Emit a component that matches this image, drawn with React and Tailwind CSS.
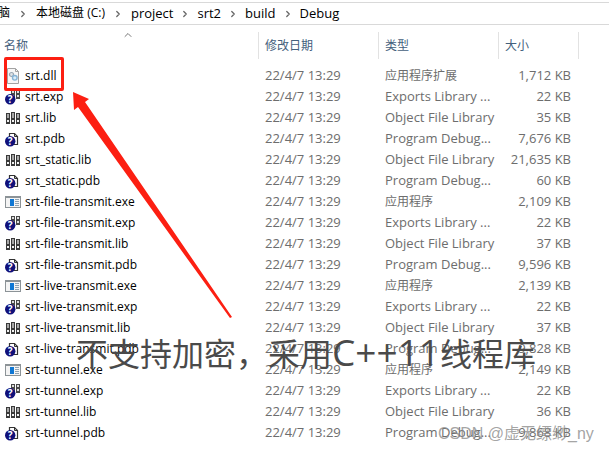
import { ChevronRight, ChevronUp } from 'lucide-react'

const path = ['脑', '本地磁盘 (C:)', 'project', 'srt2', 'build', 'Debug']

const TYPES = {
  dll: '应用程序扩展',
  exe: '应用程序',
  exp: 'Exports Library ...',
  lib: 'Object File Library',
  pdb: 'Program Debug...',
}

const files = [
  { name: 'srt.dll', size: '1,712 KB' },
  { name: 'srt.exp', size: '22 KB' },
  { name: 'srt.lib', size: '35 KB' },
  { name: 'srt.pdb', size: '7,676 KB' },
  { name: 'srt_static.lib', size: '21,635 KB' },
  { name: 'srt_static.pdb', size: '60 KB' },
  { name: 'srt-file-transmit.exe', size: '2,109 KB' },
  { name: 'srt-file-transmit.exp', size: '22 KB' },
  { name: 'srt-file-transmit.lib', size: '37 KB' },
  { name: 'srt-file-transmit.pdb', size: '9,596 KB' },
  { name: 'srt-live-transmit.exe', size: '2,139 KB' },
  { name: 'srt-live-transmit.exp', size: '22 KB' },
  { name: 'srt-live-transmit.lib', size: '37 KB' },
  { name: 'srt-live-transmit.pdb', size: '9,828 KB' },
  { name: 'srt-tunnel.exe', size: '2,149 KB' },
  { name: 'srt-tunnel.exp', size: '22 KB' },
  { name: 'srt-tunnel.lib', size: '36 KB' },
  { name: 'srt-tunnel.pdb', size: '9,868 KB' },
]

function HelpBadge() {
  return (
    <>
      <circle cx="5.2" cy="10.3" r="5.2" fill="#10107a" />
      <text x="5.2" y="14" textAnchor="middle" fontSize="10" fontWeight="700" fill="#fff">
        ?
      </text>
    </>
  )
}

function Binder({ x, y, h }) {
  return (
    <g>
      <rect x={x} y={y} width="4" height={h} fill="#3a3a3a" />
      <rect x={x + 1} y={y + 1} width="2" height={h - 7} fill="#a8a8a8" />
      <rect x={x + 1} y={y + h - 4} width="2" height="2" fill="#f2f2f2" />
    </g>
  )
}

function FileIcon({ ext }) {
  return (
    <svg viewBox="0 0 16 16" className="size-4 shrink-0" aria-hidden="true">
      {ext === 'dll' && (
        <>
          <path d="M2.5.5h8l3 3v12h-11z" fill="#f7f7f7" stroke="#a3a3a3" />
          <path d="M10.5.5v3h3" fill="none" stroke="#a3a3a3" />
          <circle cx="6.5" cy="6.5" r="2" fill="#dfe4e8" stroke="#9aa7b3" strokeWidth="1.2" />
          <circle cx="9.8" cy="9.8" r="2.3" fill="#dcecf6" stroke="#86b4d6" strokeWidth="1.4" />
        </>
      )}
      {ext === 'exe' && (
        <g shapeRendering="crispEdges">
          <rect x="0" y="2" width="16" height="12" fill="#8c9397" />
          <rect x="1" y="4" width="14" height="9" fill="#f4f4f4" />
          <rect x="5" y="5" width="4" height="7" fill="#0f77d4" />
          <path d="M10 5.5h4M10 7.5h4M10 9.5h4M10 11.5h4" stroke="#8fa3b3" />
        </g>
      )}
      {ext === 'lib' && (
        <g shapeRendering="crispEdges">
          <Binder x={1} y={3} h={11} />
          <Binder x={6} y={2} h={12} />
          <Binder x={11} y={3} h={11} />
        </g>
      )}
      {ext === 'pdb' && (
        <>
          <path d="M4.5 2.5h5l3 3v8h-8z" fill="#fff" stroke="#333" strokeWidth="1.2" />
          <path d="M9.5 2.5v3h3" fill="none" stroke="#333" />
          <HelpBadge />
        </>
      )}
      {ext === 'exp' && (
        <>
          <g shapeRendering="crispEdges" fill="#484848">
            <path d="M6 1h4v9H6zM11 1h4v9h-4z" />
            <path d="M7 2h2v2H7zM7 6h2v2H7zM12 2h2v2h-2zM12 6h2v2h-2z" fill="#ddd" />
          </g>
          <HelpBadge />
        </>
      )}
    </svg>
  )
}

function Breadcrumb() {
  return (
    <nav className="mt-[2px] flex h-[23px] items-center overflow-hidden border-y border-[#d9d9d9] text-black">
      {path.map((part, i) => (
        <div key={part} className="flex shrink-0 items-center">
          {i > 0 && <ChevronRight className={`size-2.5 text-[#666] ${i < 3 ? 'mx-2' : 'mx-[7px]'}`} strokeWidth={3} />}
          <a href="#" className={`pb-0.5 leading-[18px] ${i === 0 ? '-ml-0.5 text-xs' : i === 1 ? 'text-xs' : ''}`}>
            {part}
          </a>
        </div>
      ))}
    </nav>
  )
}

function HeaderCell({ children, className = '' }) {
  return (
    <th scope="col" className="p-0 pt-[7px] pb-[6px] text-left align-top font-normal">
      <div className={`h-[27px] border-r border-[#e2e2e2] pt-1 text-xs leading-5 ${className}`}>{children}</div>
    </th>
  )
}

export default function App() {
  return (
    <main className="relative min-h-screen overflow-hidden bg-white font-['Open_Sans','Noto_Sans_CJK_SC',sans-serif] text-[13px] leading-5">
      <Breadcrumb />

      <div className="relative">
        <table className="w-[579px] table-fixed border-collapse">
          <colgroup>
            <col className="w-[259px]" />
            <col className="w-[120px]" />
            <col className="w-[120px]" />
            <col className="w-[80px]" />
          </colgroup>
          <thead className="text-[#44607c]">
            <tr>
              <HeaderCell className="pl-1">名称</HeaderCell>
              <HeaderCell className="pl-1.5">修改日期</HeaderCell>
              <HeaderCell className="pl-1.5">类型</HeaderCell>
              <HeaderCell className="pl-1.5">大小</HeaderCell>
            </tr>
          </thead>
          <tbody className="text-[#6d6d6d]">
            {files.map((f) => {
              const ext = f.name.split('.').pop()
              return (
                <tr key={f.name} className="h-[21px] leading-[18px] whitespace-nowrap">
                  <td className="p-0 pl-[5px] text-xs leading-[18px] text-black">
                    <div className="flex items-center gap-1">
                      <FileIcon ext={ext} />
                      {f.name}
                    </div>
                  </td>
                  <td className="p-0 pb-0.5 pl-1.5">22/4/7 13:29</td>
                  <td className={ext === 'dll' || ext === 'exe' ? 'p-0 pl-1.5 text-xs leading-[18px]' : 'p-0 pb-0.5 pl-1.5'}>
                    {TYPES[ext]}
                  </td>
                  <td className="p-0 pr-2 pb-0.5 text-right">{f.size}</td>
                </tr>
              )
            })}
          </tbody>
        </table>
        <ChevronUp className="absolute top-1 left-[122px] size-3 text-[#777]" strokeWidth={2} />
      </div>

      {/* annotations drawn over the list */}
      <div className="absolute top-[57px] left-1 h-[34px] w-[60px] rounded-xs border-3 border-[#fc1f12]" />
      <svg className="absolute top-[92px] left-[72px] h-[226px] w-[160px]" viewBox="0 0 160 226" aria-hidden="true">
        <path d="M1 0L17 7 13 10 160 225 158 226 6 15 2 18z" fill="#fc1f12" />
      </svg>
      <p className="absolute top-[330px] left-[76px] text-[32px] leading-[44px] whitespace-nowrap text-[#4a4a4a]">
        不支持加密，采用<span className="text-[37px] leading-[44px]">C++11</span>线程库
      </p>
      <p className="absolute top-[422px] left-[438px] font-['Liberation_Sans','Noto_Sans_CJK_SC',sans-serif] text-base leading-6 whitespace-nowrap text-[#8c8c8c]/80">
        CSDN @虚无缥缈_ny
      </p>
    </main>
  )
}
